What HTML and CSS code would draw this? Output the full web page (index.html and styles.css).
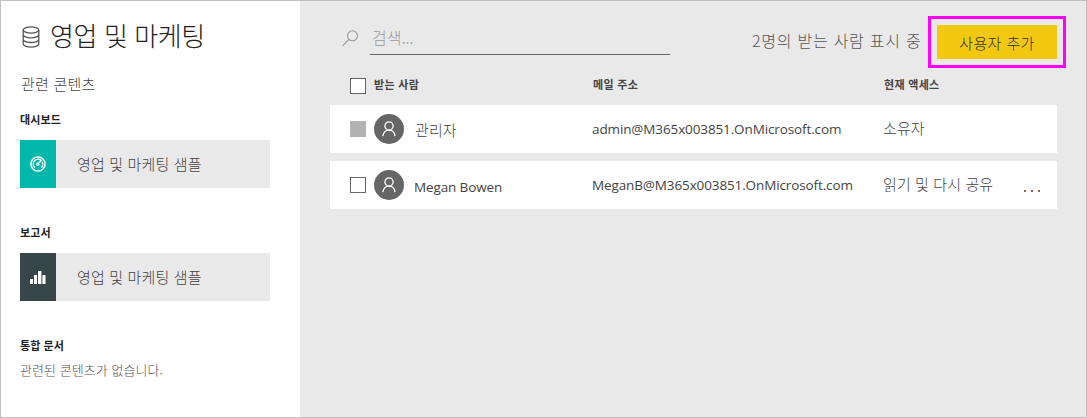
FILE: index.html
```html
<!DOCTYPE html>
<html lang="ko">
<head>
<meta charset="utf-8">
<title>영업 및 마케팅</title>
<link rel="stylesheet" href="styles.css">
</head>
<body>
<div class="app">
  <aside class="side">
    <h1 class="title">
      <svg class="db" width="18" height="22" viewBox="0 0 18 22" fill="none" stroke="#555" stroke-width="1.3"><ellipse cx="9" cy="4" rx="7.8" ry="3.1"/><path d="M1.2 4v14c0 1.7 3.5 3.1 7.8 3.1s7.8-1.4 7.8-3.1V4M1.2 8.7c0 1.7 3.5 3.1 7.8 3.1s7.8-1.4 7.8-3.1M1.2 13.4c0 1.7 3.5 3.1 7.8 3.1s7.8-1.4 7.8-3.1"/></svg>
      <span class="title-text">영업 및 마케팅</span>
    </h1>
    <p class="related">관련 콘텐츠</p>
    <h2 class="group">대시보드</h2>
    <div class="tile">
      <span class="tile-icon teal"><svg width="16" height="16" viewBox="0 0 16 16" fill="none" stroke="#fff"><circle cx="8" cy="8" r="7.1" stroke-width="1.5"/><path d="M4.8 11.6A4.8 4.8 0 0 1 10.6 4M12.1 5.7a4.8 4.8 0 0 1-.9 5.9" stroke-width="1.3"/><path d="M8 8l3.7-4.2" stroke-width="1.3"/><circle cx="7.8" cy="8.2" r="1.2" stroke-width="1.1"/></svg></span>
      <span class="tile-label">영업 및 마케팅 샘플</span>
    </div>
    <h2 class="group">보고서</h2>
    <div class="tile">
      <span class="tile-icon dark"><svg width="16" height="14" viewBox="0 0 16 14" fill="#fff"><path d="M0 9h3v5H0zM4 5h3v9H4zM8 1h3.400v13H8zM12.400 5h3.100v9h-3.100z"/></svg></span>
      <span class="tile-label">영업 및 마케팅 샘플</span>
    </div>
    <h2 class="group">통합 문서</h2>
    <p class="empty">관련된 콘텐츠가 없습니다.</p>
  </aside>
  <main class="main">
    <div class="toolbar">
      <svg class="search-icon" width="17" height="17" viewBox="0 0 17 17" fill="none" stroke="#999" stroke-width="1.1"><circle cx="10.500" cy="5.800" r="5"/><path d="M7 9.400L.6 15.800"/></svg>
      <div class="search">검색...</div>
      <span class="count">2명의 받는 사람 표시 중</span>
      <div class="highlight"><button class="add">사용자 추가</button></div>
    </div>
    <div class="row head">
      <span class="check"></span><span class="h-name">받는 사람</span><span class="h-mail">메일 주소</span><span class="h-access">현재 액세스</span>
    </div>
    <div class="row item">
      <span class="check off"></span>
      <span class="avatar"><svg width="14" height="16" viewBox="0 0 14 16" fill="none" stroke="#fff" stroke-width="1.3"><circle cx="7" cy="5" r="4.100"/><path d="M.9 15.200C1.400 11.600 3.700 9.200 7 9.200s5.600 2.400 6.100 6"/></svg></span>
      <span class="name">관리자</span><span class="mail">admin@M365x003851.OnMicrosoft.com</span><span class="access">소유자</span><span class="more"></span>
    </div>
    <div class="row item">
      <span class="check"></span>
      <span class="avatar"><svg width="14" height="16" viewBox="0 0 14 16" fill="none" stroke="#fff" stroke-width="1.3"><circle cx="7" cy="5" r="4.100"/><path d="M.9 15.200C1.400 11.600 3.700 9.200 7 9.200s5.600 2.400 6.100 6"/></svg></span>
      <span class="name latin">Megan Bowen</span><span class="mail">MeganB@M365x003851.OnMicrosoft.com</span><span class="access">읽기 및 다시 공유</span><span class="more"><i></i><i></i><i></i></span>
    </div>
  </main>
</div>
</body>
</html>
```
FILE: styles.css
```css
* { box-sizing: border-box; }
body { margin: 0; font-family: "Noto Sans CJK KR", sans-serif; color: #444; }
h1, h2, p { margin: 0; }
svg { display: block; flex: none; }

.app { display: grid; grid-template-columns: 299px 1fr; width: 1087px; height: 418px; border: 1px solid #c0c0c0; background: #e9e9e9; white-space: nowrap; overflow: hidden; }

.side { background: #fff; padding: 19px 30px 0 19px; }
.title { display: flex; align-items: center; height: 32px; color: #222; font-size: 26px; font-weight: 300; line-height: 32px; letter-spacing: -.4px; }
.title-text { margin-top: -2px; }
.db { margin: 2px 10px 0 2px; }
.related { margin-top: 22px; padding-left: 1px; font-size: 15px; font-weight: 300; line-height: 20px; letter-spacing: .2px; }
.group { height: 16px; margin-top: 17px; color: #222; font-size: 11px; font-weight: 700; line-height: 16px; letter-spacing: .1px; }
.tile { display: flex; height: 48px; margin-top: 13px; background: #e9e9e9; }
.tile + .group { margin-top: 36px; }
.tile-icon { display: flex; align-items: center; justify-content: center; width: 36px; }
.teal { background: #01b8aa; }
.dark { background: #374649; }
.tile-label { padding-left: 21px; font-size: 15px; font-weight: 300; line-height: 47px; letter-spacing: .15px; }
.empty { margin-top: 8px; color: #555; font-size: 13px; font-weight: 300; line-height: 18px; letter-spacing: .05px; }

.main { padding: 15px 20px 0 30px; }
.toolbar { display: flex; height: 52px; }
.search-icon { margin: 14px 11px 0 12px; }
.search { width: 300px; height: 39px; border-bottom: 1px solid #666; padding-left: 2px; color: #999; font-size: 16px; font-weight: 300; line-height: 43px; }
.count { width: 180px; margin-left: 82px; font-size: 16px; font-weight: 300; line-height: 49px; letter-spacing: .75px; color: #555; }
.highlight { width: 138px; height: 52px; margin-left: -4px; border: 3px solid #f0f; padding: 6px; }
.add { display: block; width: 120px; height: 34px; border: 0; padding: 0; background: #f2c811; color: #333; font: 300 15px/33px "Noto Sans CJK KR", sans-serif; letter-spacing: .4px; }

.row { display: grid; grid-template-columns: 24px 41px 178px 291px 139px 1fr; width: 727px; padding-left: 20px; }
.check { width: 16px; height: 16px; border: 1px solid #666; background: #fff; }
.off { border: 0; background: #b3b3b3; }
.head { height: 37px; font-size: 11px; font-weight: 700; line-height: 16px; letter-spacing: .3px; }
.head .check { margin-top: 10px; }
.head span:not(.check) { padding-top: 8px; }
.h-name { grid-column: 2 / 4; }
.item { align-items: center; height: 48px; margin-bottom: 8px; background: #fff; font-size: 15px; font-weight: 300; letter-spacing: .1px; line-height: 20px; }
.avatar { display: flex; align-items: center; justify-content: center; width: 30px; height: 30px; border-radius: 50%; background: #666; }
.name { padding-top: 1px; }
.access { margin: -2px 0 0 -1px; }
.latin, .mail { margin-left: -1px; font: 400 13.5px/20px "Open Sans", sans-serif; letter-spacing: -.12px; }
.latin { padding-top: 4px; }
.more { display: flex; gap: 5px; padding: 11px 0 0 1px; }
.more i { width: 2px; height: 2px; background: #975f45; }
```
